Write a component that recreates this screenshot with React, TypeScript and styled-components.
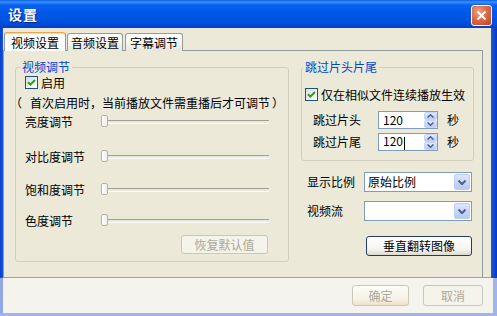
import React from "react";
import styled, { createGlobalStyle } from "styled-components";

const GlobalStyle = createGlobalStyle`
  html, body { margin: 0; padding: 0; background: #ffffff; }
  body {
    font-family: "Noto Sans CJK SC", "Noto Sans", sans-serif;
    font-size: 12px;
    color: #000;
  }
  * { box-sizing: border-box; }
`;

const Window = styled.div`
  width: 497px;
  height: 316px;
  display: flex;
  flex-direction: column;
  overflow: hidden;
`;

const TitleBar = styled.div`
  height: 28px;
  flex: none;
  display: flex;
  align-items: flex-start;
  justify-content: space-between;
  padding: 0 5px 0 8px;
  background: linear-gradient(
    to bottom,
    #0a5fe6 0px,
    #3d8ff9 2px,
    #0862f0 5px,
    #0058ea 12px,
    #0053e0 20px,
    #004ad6 25px,
    #0040c4 28px
  );
`;

const Title = styled.div`
  color: #fff;
  font-weight: bold;
  font-size: 14px;
  line-height: 28px;
  letter-spacing: 1px;
  text-shadow: 1px 1px 0 #0c2583;
`;

const CloseButton = styled.div`
  margin-top: 5px;
  width: 21px;
  height: 21px;
  border: 1px solid #fff;
  border-radius: 3px;
  background: radial-gradient(circle at 35% 30%, #f0a080 0%, #e06a45 45%, #c4401f 100%);
  display: flex;
  align-items: center;
  justify-content: center;
`;

const Row = styled.div<{ $h: number }>`
  display: flex;
  height: ${(p) => p.$h}px;
  flex: none;
`;

const Edge = styled.div<{ $w: number; $c: string }>`
  width: ${(p) => p.$w}px;
  flex: none;
  background: ${(p) => p.$c};
`;

const Content = styled.div`
  flex: 1;
  background: #ece9d8;
  display: flex;
  flex-direction: column;
  padding-top: 4px;
  border-bottom: 1px solid #a3a193;
`;

const TabRow = styled.div`
  display: flex;
  align-items: flex-end;
  height: 19px;
  padding-left: 1px;
  flex: none;
`;

const Tab = styled.div<{ $active?: boolean; $w: number; $ml: number }>`
  width: ${(p) => p.$w}px;
  margin-left: ${(p) => p.$ml}px;
  height: ${(p) => (p.$active ? 19 : 18)}px;
  border: 1px solid #919b9c;
  border-bottom: none;
  border-radius: 3px 3px 0 0;
  display: flex;
  align-items: center;
  justify-content: center;
  line-height: 14px;
  font-size: 12px;
  position: relative;
  z-index: ${(p) => (p.$active ? 1 : 0)};
  background: ${(p) =>
    p.$active ? "#fcfcfe" : "linear-gradient(to bottom, #ffffff, #f3f2ec 60%, #e8e6dc)"};
  border-top-color: ${(p) => (p.$active ? "#e8a84a" : "#919b9c")};
  box-shadow: ${(p) => (p.$active ? "inset 0 1px 0 #ffd88a" : "none")};
  padding-top: ${(p) => (p.$active ? 1 : 0)}px;
`;

const Panel = styled.div`
  flex: 1;
  margin-top: -1px;
  margin-right: 8px;
  border: 1px solid #919b9c;
  border-bottom: none;
  display: flex;
  gap: 12px;
  padding: 9px 0 0 11px;
`;

const Group = styled.fieldset<{ $w: number; $h: number }>`
  margin: 0;
  padding: 0;
  min-width: 0;
  width: ${(p) => p.$w}px;
  height: ${(p) => p.$h}px;
  border: 1px solid #d0d0bf;
  border-radius: 3px;
  display: flex;
  flex-direction: column;
  align-items: flex-start;
  flex: none;
`;

const Legend = styled.legend<{ $ml: number }>`
  margin-left: ${(p) => p.$ml}px;
  padding: 0 2px;
  color: #0046d5;
  font-size: 12px;
  line-height: 14px;
`;

const CheckRow = styled.div<{ $mt: number; $ml: number }>`
  display: flex;
  align-items: center;
  gap: 3px;
  margin-top: ${(p) => p.$mt}px;
  margin-left: ${(p) => p.$ml}px;
  height: 13px;
  line-height: 13px;
  white-space: nowrap;
`;

const CheckBox = styled.span`
  width: 13px;
  height: 13px;
  flex: none;
  border: 1px solid #1c5180;
  background: linear-gradient(135deg, #dcdcd7, #ffffff);
  display: flex;
  align-items: center;
  justify-content: center;
`;

const Note = styled.div`
  margin-top: 7px;
  margin-left: -6px;
  line-height: 14px;
  white-space: nowrap;
  display: flex;
  align-items: center;
`;

const Punct = styled.span<{ $w: number; $pl?: number }>`
  display: inline-block;
  width: ${(p) => p.$w}px;
  padding-left: ${(p) => p.$pl ?? 0}px;
  text-align: left;
  overflow: visible;
  white-space: nowrap;
`;

const SliderRow = styled.div<{ $mt: number }>`
  display: flex;
  align-items: center;
  height: 14px;
  margin-top: ${(p) => p.$mt}px;
  margin-left: 9px;
`;

const RowLabel = styled.span<{ $w: number }>`
  width: ${(p) => p.$w}px;
  flex: none;
  line-height: 14px;
  white-space: nowrap;
`;

const SliderTrack = styled.div`
  position: relative;
  width: 168px;
  height: 14px;
  &::before {
    content: "";
    position: absolute;
    left: 3px;
    right: 0;
    top: 5px;
    height: 2px;
    border-top: 1px solid #a09f96;
    border-bottom: 1px solid #ffffff;
  }
`;

const Thumb = styled.div`
  position: absolute;
  left: 0;
  top: 0;
  width: 7px;
  height: 12px;
  border: 1px solid #b5b3a8;
  border-radius: 2px;
  background: linear-gradient(to right, #ffffff, #efeee8);
`;

const PushButton = styled.div<{ $w: number; $h: number; $disabled?: boolean }>`
  width: ${(p) => p.$w}px;
  height: ${(p) => p.$h}px;
  flex: none;
  border: 1px solid ${(p) => (p.$disabled ? "#c9c7ba" : "#1c3d6e")};
  border-radius: 3px;
  background: ${(p) =>
    p.$disabled ? "#f5f4ea" : "linear-gradient(to bottom, #ffffff, #f4f3ee 70%, #dcdad0)"};
  color: ${(p) => (p.$disabled ? "#aca899" : "#000")};
  display: flex;
  align-items: center;
  justify-content: center;
  line-height: 14px;
  white-space: nowrap;
`;

const RestoreButton = styled(PushButton)`
  margin-top: 7px;
  align-self: flex-end;
  margin-right: 20px;
`;

const RightColumn = styled.div`
  width: 173px;
  flex: none;
  display: flex;
  flex-direction: column;
  align-items: flex-start;
`;

const FieldRow = styled.div<{ $mt: number; $ml: number; $h: number }>`
  display: flex;
  align-items: center;
  height: ${(p) => p.$h}px;
  margin-top: ${(p) => p.$mt}px;
  margin-left: ${(p) => p.$ml}px;
`;

const SpinBox = styled.div`
  width: 60px;
  height: 18px;
  flex: none;
  border: 1px solid #7f9db9;
  background: #fff;
  display: flex;
  align-items: center;
  padding-left: 4px;
  line-height: 14px;
`;

const SpinValue = styled.span`
  flex: 1;
`;

const Caret = styled.span`
  display: inline-block;
  width: 1px;
  height: 13px;
  background: #000;
  vertical-align: middle;
  margin-left: 1px;
`;

const SpinButtons = styled.div`
  width: 13px;
  height: 16px;
  display: flex;
  flex-direction: column;
`;

const SpinHalf = styled.div`
  flex: 1;
  border: 1px solid #c3d3fd;
  border-radius: 2px;
  background: linear-gradient(to bottom, #e2eaff, #b9cbf5);
  display: flex;
  align-items: center;
  justify-content: center;
`;

const Unit = styled.span`
  margin-left: 9px;
  line-height: 14px;
`;

const Combo = styled.div`
  width: 108px;
  height: 20px;
  flex: none;
  border: 1px solid #7f9db9;
  background: #fff;
  display: flex;
  align-items: center;
  padding: 1px 1px 1px 3px;
`;

const ComboText = styled.span`
  flex: 1;
  line-height: 14px;
  white-space: nowrap;
`;

const DropButton = styled.div`
  width: 16px;
  height: 16px;
  flex: none;
  border: 1px solid #bccdf7;
  border-radius: 2px;
  background: linear-gradient(to bottom, #dce6fe, #b6c8f4);
  display: flex;
  align-items: center;
  justify-content: center;
`;

const FlipButton = styled(PushButton)`
  margin-top: 15px;
  margin-left: 65px;
`;

const BottomContent = styled.div`
  flex: 1;
  background: #f4f3ee;
  display: flex;
  justify-content: flex-end;
  align-items: flex-start;
  gap: 14px;
  padding: 7px 10px 0 0;
`;

const OkButton = styled(PushButton)`
  background: linear-gradient(to bottom, #fdfcf8, #f6f1e6 70%, #f1e2c8);
`;

const BottomEdge = styled.div`
  height: 3px;
  flex: none;
  background: #a4b4e8;
`;

const Check = () => (
  <svg width="9" height="9" viewBox="0 0 9 9">
    <path d="M1 4.2 L3.4 6.6 L8 2" stroke="#21a121" strokeWidth="2" fill="none" />
  </svg>
);

const Chevron = ({ up, w = 7, h = 4, sw = 1.5 }: { up?: boolean; w?: number; h?: number; sw?: number }) => (
  <svg width={w} height={h} viewBox={`0 0 ${w} ${h}`}>
    <path
      d={up ? `M0.5 ${h - 0.5} L${w / 2} 0.8 L${w - 0.5} ${h - 0.5}` : `M0.5 0.5 L${w / 2} ${h - 0.8} L${w - 0.5} 0.5`}
      stroke="#4d6185"
      strokeWidth={sw}
      fill="none"
    />
  </svg>
);

const Slider = () => (
  <SliderTrack>
    <Thumb />
  </SliderTrack>
);

const Spin = ({ value, caret }: { value: string; caret?: boolean }) => (
  <SpinBox>
    <SpinValue>
      {value}
      {caret && <Caret />}
    </SpinValue>
    <SpinButtons>
      <SpinHalf>
        <Chevron up w={7} h={4} />
      </SpinHalf>
      <SpinHalf>
        <Chevron w={7} h={4} />
      </SpinHalf>
    </SpinButtons>
  </SpinBox>
);

const sliders: { label: string; mt: number }[] = [
  { label: "亮度调节", mt: 5 },
  { label: "对比度调节", mt: 21 },
  { label: "饱和度调节", mt: 19 },
  { label: "色度调节", mt: 17 },
];

export default function App() {
  return (
    <>
      <GlobalStyle />
      <Window>
        <TitleBar>
          <Title>设置</Title>
          <CloseButton>
            <svg width="13" height="13" viewBox="0 0 13 13">
              <path d="M2.5 2.5 L10.5 10.5 M10.5 2.5 L2.5 10.5" stroke="#fff" strokeWidth="2.2" />
            </svg>
          </CloseButton>
        </TitleBar>
        <Row $h={250}>
          <Edge $w={3} $c="linear-gradient(to right, #0a3fc8, #1656e0)" />
          <Content>
            <TabRow>
              <Tab $active $w={62} $ml={0}>视频设置</Tab>
              <Tab $w={56} $ml={1}>音频设置</Tab>
              <Tab $w={58} $ml={2}>字幕调节</Tab>
            </TabRow>
            <Panel>
              <Group $w={274} $h={202}>
                <Legend $ml={4}>视频调节</Legend>
                <CheckRow $mt={2} $ml={9}>
                  <CheckBox>
                    <Check />
                  </CheckBox>
                  <span>启用</span>
                </CheckRow>
                <Note>
                  <Punct $w={20}>（</Punct>
                  <span>首次启用时</span>
                  <Punct $w={12}>，</Punct>
                  <span>当前播放文件需重播后才可调节</span>
                  <Punct $w={12} $pl={2}>）</Punct>
                </Note>
                {sliders.map((s) => (
                  <SliderRow key={s.label} $mt={s.mt}>
                    <RowLabel $w={76}>{s.label}</RowLabel>
                    <Slider />
                  </SliderRow>
                ))}
                <RestoreButton $w={87} $h={19} $disabled>
                  恢复默认值
                </RestoreButton>
              </Group>
              <RightColumn>
                <Group $w={173} $h={101}>
                  <Legend $ml={1}>跳过片头片尾</Legend>
                  <CheckRow $mt={14} $ml={3}>
                    <CheckBox>
                      <Check />
                    </CheckBox>
                    <span>仅在相似文件连续播放生效</span>
                  </CheckRow>
                  <FieldRow $mt={10} $ml={11} $h={18}>
                    <RowLabel $w={65}>跳过片头</RowLabel>
                    <Spin value="120" />
                    <Unit>秒</Unit>
                  </FieldRow>
                  <FieldRow $mt={4} $ml={11} $h={18}>
                    <RowLabel $w={65}>跳过片尾</RowLabel>
                    <Spin value="120" caret />
                    <Unit>秒</Unit>
                  </FieldRow>
                </Group>
                <FieldRow $mt={11} $ml={6} $h={20}>
                  <RowLabel $w={57}>显示比例</RowLabel>
                  <Combo>
                    <ComboText>原始比例</ComboText>
                    <DropButton>
                      <Chevron w={8} h={5} sw={2} />
                    </DropButton>
                  </Combo>
                </FieldRow>
                <FieldRow $mt={9} $ml={6} $h={20}>
                  <RowLabel $w={57}>视频流</RowLabel>
                  <Combo>
                    <ComboText />
                    <DropButton>
                      <Chevron w={8} h={5} sw={2} />
                    </DropButton>
                  </Combo>
                </FieldRow>
                <FlipButton $w={106} $h={20}>
                  垂直翻转图像
                </FlipButton>
              </RightColumn>
            </Panel>
          </Content>
          <Edge $w={6} $c="linear-gradient(to right, #1a5ae0, #0838c0)" />
        </Row>
        <Row $h={35}>
          <Edge $w={3} $c="#93a7e6" />
          <BottomContent>
            <OkButton $w={57} $h={21} $disabled>
              确定
            </OkButton>
            <PushButton $w={60} $h={21} $disabled>
              取消
            </PushButton>
          </BottomContent>
          <Edge $w={4} $c="#a4b4e8" />
        </Row>
        <BottomEdge />
      </Window>
    </>
  );
}
